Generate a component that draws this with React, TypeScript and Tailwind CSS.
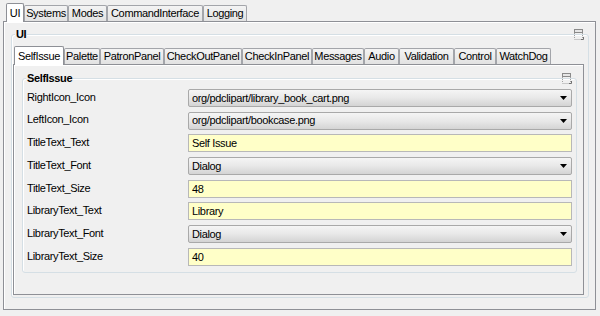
import type { ReactNode } from 'react';

const topTabs = [
  { label: 'UI', w: 'w-[18px]', active: true },
  { label: 'Systems', w: 'w-[44px]' },
  { label: 'Modes', w: 'w-[39px]' },
  { label: 'CommandInterface', w: 'w-[96px]' },
  { label: 'Logging', w: 'w-[44px]' },
];

const innerTabs = [
  { label: 'SelfIssue', w: 'w-[50px]', active: true },
  { label: 'Palette', w: 'w-[36px]' },
  { label: 'PatronPanel', w: 'w-[64px]' },
  { label: 'CheckOutPanel', w: 'w-[78px]' },
  { label: 'CheckInPanel', w: 'w-[70px]' },
  { label: 'Messages', w: 'w-[52px]' },
  { label: 'Audio', w: 'w-[35px]' },
  { label: 'Validation', w: 'w-[55px]' },
  { label: 'Control', w: 'w-[42px]' },
  { label: 'WatchDog', w: 'w-[55px]' },
];

const rows: { label: string; value: string; combo?: boolean }[] = [
  { label: 'RightIcon_Icon', value: 'org/pdclipart/library_book_cart.png', combo: true },
  { label: 'LeftIcon_Icon', value: 'org/pdclipart/bookcase.png', combo: true },
  { label: 'TitleText_Text', value: 'Self Issue' },
  { label: 'TitleText_Font', value: 'Dialog', combo: true },
  { label: 'TitleText_Size', value: '48' },
  { label: 'LibraryText_Text', value: 'Library' },
  { label: 'LibraryText_Font', value: 'Dialog', combo: true },
  { label: 'LibraryText_Size', value: '40' },
];

const Tab = ({ label, w, active }: { label: string; w: string; active?: boolean }) =>
  active ? (
    <div
      className={`${w} h-[19px] -mb-px relative z-10 bg-white border border-b-0 border-[#8e9096] rounded-t-[2px] flex items-center justify-center`}
    >
      {label}
    </div>
  ) : (
    <div
      className={`${w} h-[16px] bg-linear-to-b from-[#f4f4f4] to-[#e2e2e2] border border-b-0 border-[#a3a5aa] rounded-t-[2px] flex items-center justify-center`}
    >
      {label}
    </div>
  );

const DetachIcon = () => (
  <svg width="10" height="11" viewBox="0 0 10 11">
    <rect x="0.5" y="0.5" width="8" height="3" fill="#e6e6e6" stroke="#8a8a8a" />
    <path d="M0.5 4v6M8.5 4v6M0.5 10.5h8" stroke="#a0a0a0" strokeDasharray="1 1" fill="none" />
    <path d="M7 10.5h2.5V8" stroke="#707070" fill="none" />
  </svg>
);

const Group = ({
  title,
  className,
  titleClass,
  children,
}: {
  title: string;
  className: string;
  titleClass: string;
  children: ReactNode;
}) => (
  <div
    className={`relative border border-[#d5dfe5] rounded-[3px] shadow-[inset_1px_1px_0_#fff] flex flex-col ${className}`}
  >
    <span className={`-mt-[7px] self-start px-px bg-[#f0f0f0] font-bold leading-[13px] ${titleClass}`}>{title}</span>
    <div className="absolute -top-[6px] right-[4px]">
      <DetachIcon />
    </div>
    {children}
  </div>
);

const Arrow = () => (
  <svg width="7" height="4" viewBox="0 0 7 4" className="shrink-0">
    <path d="M0 0h7L3.5 4z" fill="#000" />
  </svg>
);

export default function App() {
  return (
    <div className="w-[600px] h-[316px] bg-[#f0f0f0] pl-[3px] pr-[4px] pt-[3px] text-[11px] tracking-[-0.35px] text-black font-['Liberation_Sans',Arial,sans-serif] overflow-hidden">
      <div className="flex items-end h-[18px] pl-[3px]">
        {topTabs.map((t) => (
          <Tab key={t.label} {...t} />
        ))}
      </div>
      <div className="h-[289px] border border-[#8e9096] bg-[#f0f0f0] shadow-[inset_1px_1px_0_#fff] pl-[7px] pr-[6px] pt-[12px]">
        <Group title="UI" className="h-[264px] pl-px pr-[4px]" titleClass="ml-[2px]">
          <div className="flex items-end h-[18px] mt-[5px] pl-px">
            {innerTabs.map((t) => (
              <Tab key={t.label} {...t} />
            ))}
          </div>
          <div className="h-[231px] border border-[#8e9096] shadow-[inset_1px_1px_0_#fff] pl-[8px] pr-[6px] pt-[13px]">
            <Group title="SelfIssue" className="h-[195px] pl-[4px] pr-[4px]" titleClass="-ml-px">
              <div className="grid grid-cols-[161px_1fr] gap-y-[4.7px] pt-[4px]">
                {rows.map((r) => (
                  <div key={r.label} className="contents">
                    <div className="h-[18px] flex items-center -mt-[1px]">{r.label}</div>
                    {r.combo ? (
                      <div className="h-[18px] border border-[#a9a9a9] rounded-[2px] bg-linear-to-b from-[#f5f5f5] via-[#e8e8e8] to-[#d4d4d4] flex items-center pl-[3px] pr-[4px]">
                        <span className="flex-1">{r.value}</span>
                        <Arrow />
                      </div>
                    ) : (
                      <div className="h-[18px] border border-[#b8b8b8] bg-[#ffffc8] flex items-center pl-[3px]">
                        {r.value}
                      </div>
                    )}
                  </div>
                ))}
              </div>
            </Group>
          </div>
        </Group>
      </div>
    </div>
  );
}
